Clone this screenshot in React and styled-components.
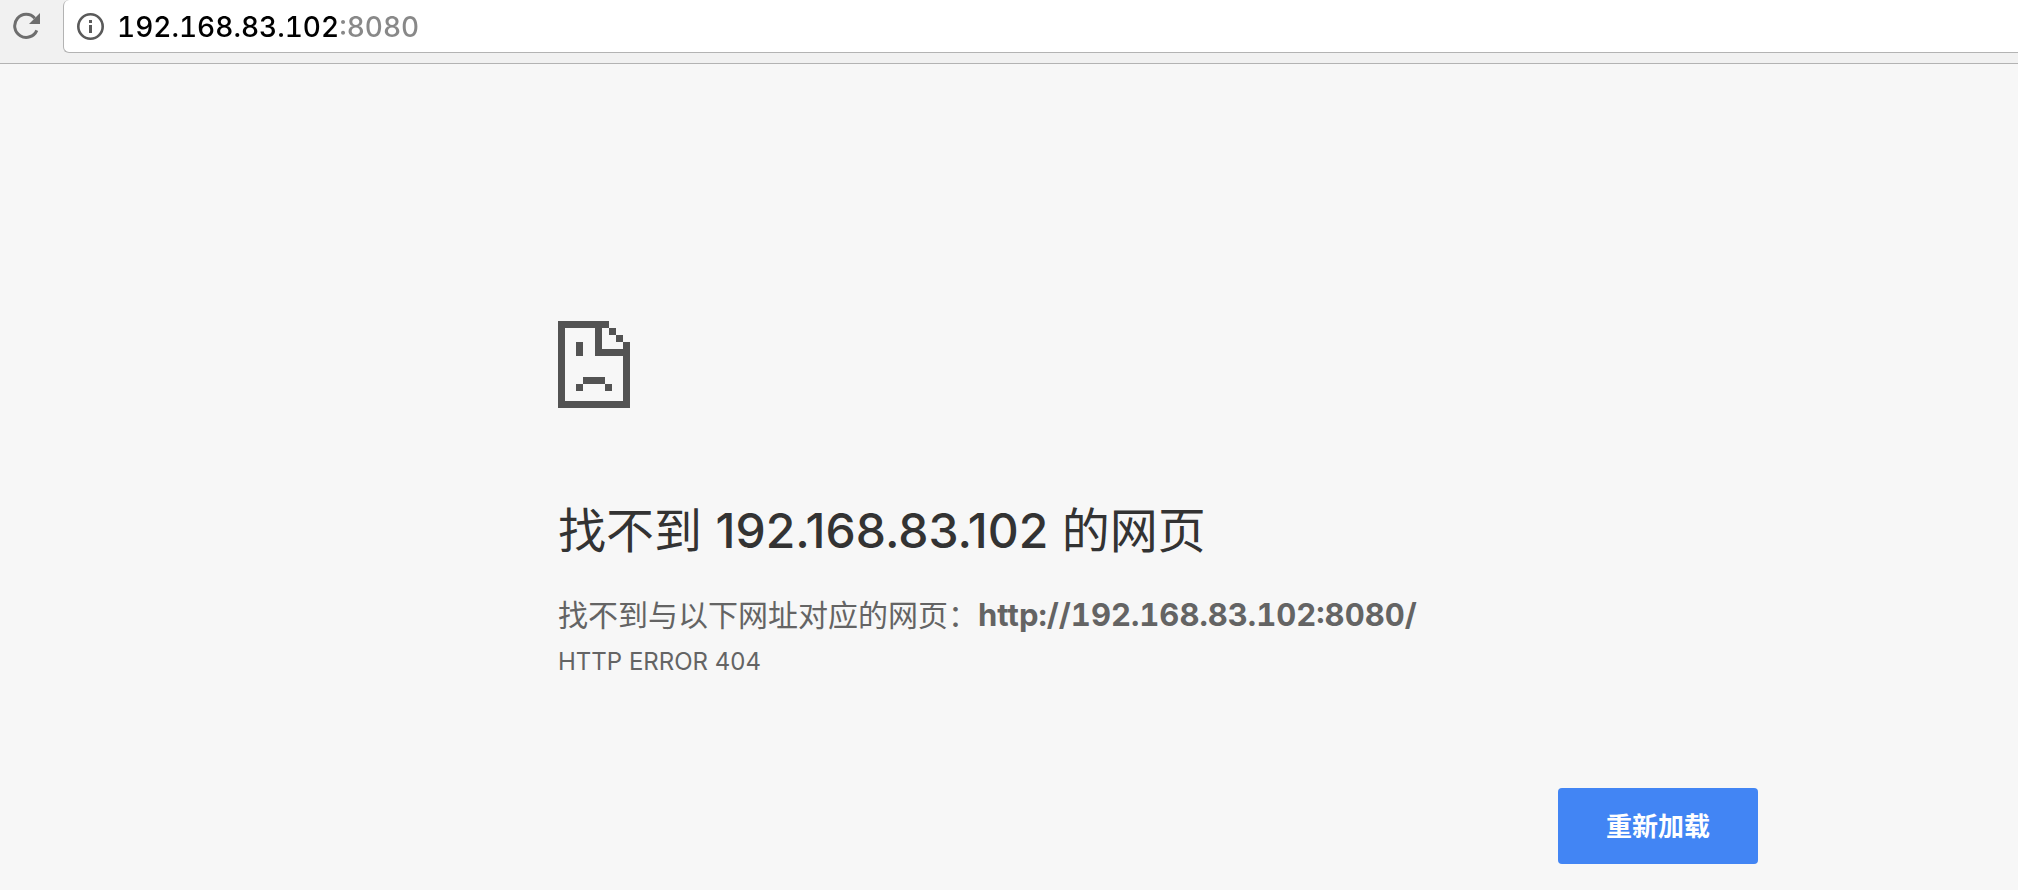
import React from 'react';
import styled, { createGlobalStyle } from 'styled-components';

const GlobalStyle = createGlobalStyle`
  * { box-sizing: border-box; }
  body {
    margin: 0;
    background: #f7f7f7;
    color: #646464;
    font-family: Inter, "Noto Sans CJK SC", sans-serif;
  }
`;

const Toolbar = styled.header`
  display: flex;
  align-items: flex-start;
  height: 64px;
  padding-left: 12px;
  background: #f1f1f1;
  border-bottom: 1px solid #b3b3b3;
`;

const IconButton = styled.button`
  display: flex;
  flex: none;
  padding: 0;
  border: 0;
  background: none;
  cursor: pointer;
`;

const ReloadButton = styled(IconButton)`
  margin: 12px 22px 0 0;
`;

const AddressBar = styled.div`
  display: flex;
  flex: 1;
  align-items: center;
  gap: 13px;
  height: 53px;
  padding-left: 13px;
  background: #fff;
  border: 1px solid #b3b3b3;
  border-width: 0 0 1px 1px;
  border-radius: 6px 0 0 6px;
`;

const AddressInput = styled.input`
  flex: 1;
  min-width: 0;
  height: 52px;
  padding: 2px 0 0;
  border: 0;
  outline: 0;
  font: 500 28px/50px Inter, sans-serif;
  font-variant-numeric: tabular-nums;
  color: transparent;
  caret-color: #000;
  background: linear-gradient(to right, #000 ${(p) => p.$hostWidth}px, #888 ${(p) => p.$hostWidth}px);
  background-clip: text;
  -webkit-background-clip: text;
`;

const ErrorPage = styled.main`
  max-width: 1758px;
  padding: 257px 0 26px 558px;
`;

const Heading = styled.h1`
  margin: 87px 0 0;
  font-size: 48px;
  font-weight: 400;
  line-height: 72px;
  color: #333;
`;

const Host = styled.span`
  font-weight: 500;
`;

const Summary = styled.p`
  margin: 25px 0 0;
  font-size: 30px;
  line-height: 46px;
`;

const FailedUrl = styled.strong`
  font-size: 31px;
  font-optical-sizing: none;
  font-variant-numeric: tabular-nums;
`;

const ErrorCode = styled.p`
  margin: 4px 0 0;
  font-size: 24px;
  line-height: 40px;
`;

const Actions = styled.div`
  display: flex;
  justify-content: flex-end;
  margin-top: 106px;
`;

const PrimaryButton = styled.button`
  width: 200px;
  height: 76px;
  padding: 2px 0 0;
  border: 0;
  border-radius: 4px;
  background: #4285f4;
  color: #fff;
  font: 700 26px/40px Inter, "Noto Sans CJK SC", sans-serif;
  cursor: pointer;
`;

const ReloadIcon = () => (
  <svg width="29" height="28" viewBox="0 0 29 28" aria-hidden="true">
    <path d="M22.8 6.2A11.5 11.5 0 1 0 24.8 18.3" fill="none" stroke="#6e6e6e" strokeWidth="3" />
    <path d="M28 1v11H17z" fill="#6e6e6e" />
  </svg>
);

const InfoIcon = () => (
  <svg width="27" height="27" viewBox="0 0 27 27" aria-hidden="true">
    <circle cx="13.5" cy="13.5" r="12.2" fill="none" stroke="#5a5a5a" strokeWidth="2.6" />
    <path d="M12 7h3v3h-3zM12 12h3v8h-3z" fill="#5a5a5a" />
  </svg>
);

const SadPage = styled.svg`
  display: block;
`;

const SadPageIcon = () => (
  <SadPage width="72" height="87" viewBox="0 0 72 87" fill="#535353" shapeRendering="crispEdges" aria-hidden="true">
    <path d="M0 0h51v7H0zM0 7h7v80H0zM7 80h65v7H7zM65 21h7v59h-7zM51 7h7v7h-7zM58 14h7v7h-7zM37 7h7v28h-7zM44 28h21v7H44z" />
    <path d="M18 21h7v14h-7zM25 56h22v7H25zM18 63h7v7h-7zM47 63h7v7h-7z" />
  </SadPage>
);

export default function App() {
  const reload = () => window.location.reload();
  return (
    <>
      <GlobalStyle />
      <Toolbar>
        <ReloadButton type="button" aria-label="重新加载此页" onClick={reload}>
          <ReloadIcon />
        </ReloadButton>
        <AddressBar>
          <IconButton type="button" aria-label="查看网站信息">
            <InfoIcon />
          </IconButton>
          <AddressInput type="text" aria-label="地址" defaultValue="192.168.83.102:8080" $hostWidth={222} spellCheck={false} />
        </AddressBar>
      </Toolbar>
      <ErrorPage>
        <SadPageIcon />
        <Heading>
          找不到 <Host>192.168.83.102</Host> 的网页
        </Heading>
        <Summary>
          找不到与以下网址对应的网页：<FailedUrl>http://192.168.83.102:8080/</FailedUrl>
        </Summary>
        <ErrorCode>HTTP ERROR 404</ErrorCode>
        <Actions>
          <PrimaryButton type="button" onClick={reload}>重新加载</PrimaryButton>
        </Actions>
      </ErrorPage>
    </>
  );
}
